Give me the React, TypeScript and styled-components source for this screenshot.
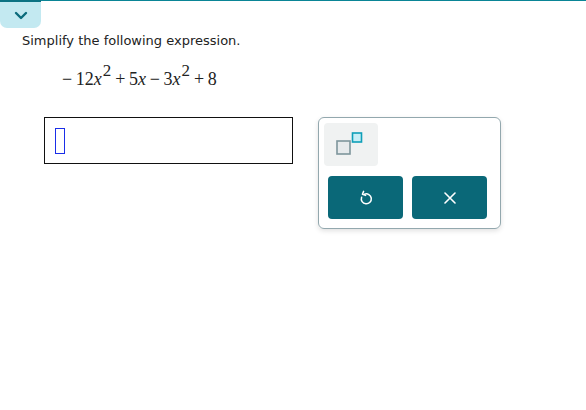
import React from 'react';
import styled, { createGlobalStyle } from 'styled-components';

const Global = createGlobalStyle`
  html, body {
    margin: 0;
    padding: 0;
    background: #fff;
  }
  body {
    width: 586px;
    height: 410px;
    overflow: hidden;
  }
`;

const Page = styled.div`
  position: relative;
  width: 586px;
  height: 410px;
  border-top: 1px solid #0a8596;
  box-sizing: border-box;
`;

const Tab = styled.div`
  width: 41px;
  height: 28px;
  margin-top: -1px;
  background: #c3e9f1;
  border-top: 2px solid #0c7283;
  border-radius: 0 0 7px 7px;
  box-sizing: border-box;
  display: flex;
  align-items: center;
  justify-content: center;
`;

const Prompt = styled.p`
  margin: 4px 0 0 22px;
  font-family: 'DejaVu Sans', Verdana, sans-serif;
  font-size: 13px;
  color: #222;
  line-height: 18px;
`;

const Expr = styled.div`
  margin: 14px 0 0 62px;
  font-family: 'Liberation Serif', 'Times New Roman', serif;
  font-size: 18px;
  color: #222;
  line-height: 30px;
  white-space: pre;
`;

const Var = styled.i`
  font-style: italic;
`;

const Sup = styled.span`
  display: inline-block;
  font-size: 17px;
  position: relative;
  top: -9px;
  line-height: 0;
  margin: 0 4px 0 1px;
`;

const Row = styled.div`
  display: flex;
  align-items: flex-start;
  margin-top: 23px;
  padding-left: 44px;
`;

const Input = styled.div`
  width: 249px;
  height: 47px;
  border: 1.5px solid #111;
  box-sizing: border-box;
  padding: 10px 0 0 10px;
`;

const Cursor = styled.div`
  width: 10px;
  height: 26px;
  border: 1px solid #1a2ee8;
  box-sizing: border-box;
`;

const Panel = styled.div`
  margin-left: 25px;
  width: 183px;
  height: 112px;
  border: 1px solid #93a8ae;
  border-radius: 6px;
  box-sizing: border-box;
  box-shadow: 0 2px 5px rgba(0, 0, 0, 0.12);
  padding: 5px 9px 0 5px;
  display: flex;
  flex-direction: column;
`;

const SupBtn = styled.div`
  width: 54px;
  height: 43px;
  background: #f0f2f2;
  border-radius: 4px;
  display: flex;
  align-items: center;
  justify-content: center;
`;

const Buttons = styled.div`
  display: flex;
  gap: 9px;
  margin: 10px 0 0 4px;
`;

const ActionBtn = styled.div`
  width: 75px;
  height: 43px;
  background: #0a6878;
  border-radius: 4px;
  display: flex;
  align-items: center;
  justify-content: center;
`;

export default function App() {
  return (
    <>
      <Global />
      <Page>
        <Tab>
          <svg width="14" height="9" viewBox="0 0 14 9">
            <path d="M2 2 L7 7 L12 2" fill="none" stroke="#0b6b7c" strokeWidth="2.4" strokeLinecap="round" strokeLinejoin="round" />
          </svg>
        </Tab>
        <Prompt>Simplify the following expression.</Prompt>
        <Expr>
          {'\u2212\u200912'}<Var>x</Var><Sup>2</Sup>{'+\u20095'}<Var>x</Var>{'\u2009\u2212\u20093'}<Var>x</Var><Sup>2</Sup>{'+\u20098'}
        </Expr>
        <Row>
          <Input>
            <Cursor />
          </Input>
          <Panel>
            <SupBtn>
              <svg width="30" height="26" viewBox="0 0 30 26">
                <rect x="1" y="9" width="13" height="13" fill="#e6eaec" stroke="#7e959c" strokeWidth="1.6" />
                <rect x="16.5" y="1" width="9" height="9" fill="#c7eef6" stroke="#0e9fb8" strokeWidth="1.6" />
              </svg>
            </SupBtn>
            <Buttons>
              <ActionBtn>
                <svg width="14" height="16" viewBox="0 0 14 16">
                  <path d="M5.5 4.2 A5 5 0 1 1 2.6 7.2" fill="none" stroke="#fff" strokeWidth="1.5" strokeLinecap="round" />
                  <path d="M4.6 1.4 L3.4 4.4 L6.6 5.4" fill="none" stroke="#fff" strokeWidth="1.5" strokeLinecap="round" strokeLinejoin="round" />
                </svg>
              </ActionBtn>
              <ActionBtn>
                <svg width="12" height="12" viewBox="0 0 12 12">
                  <path d="M1 1 L11 11 M11 1 L1 11" stroke="#fff" strokeWidth="1.6" strokeLinecap="round" />
                </svg>
              </ActionBtn>
            </Buttons>
          </Panel>
        </Row>
      </Page>
    </>
  );
}
